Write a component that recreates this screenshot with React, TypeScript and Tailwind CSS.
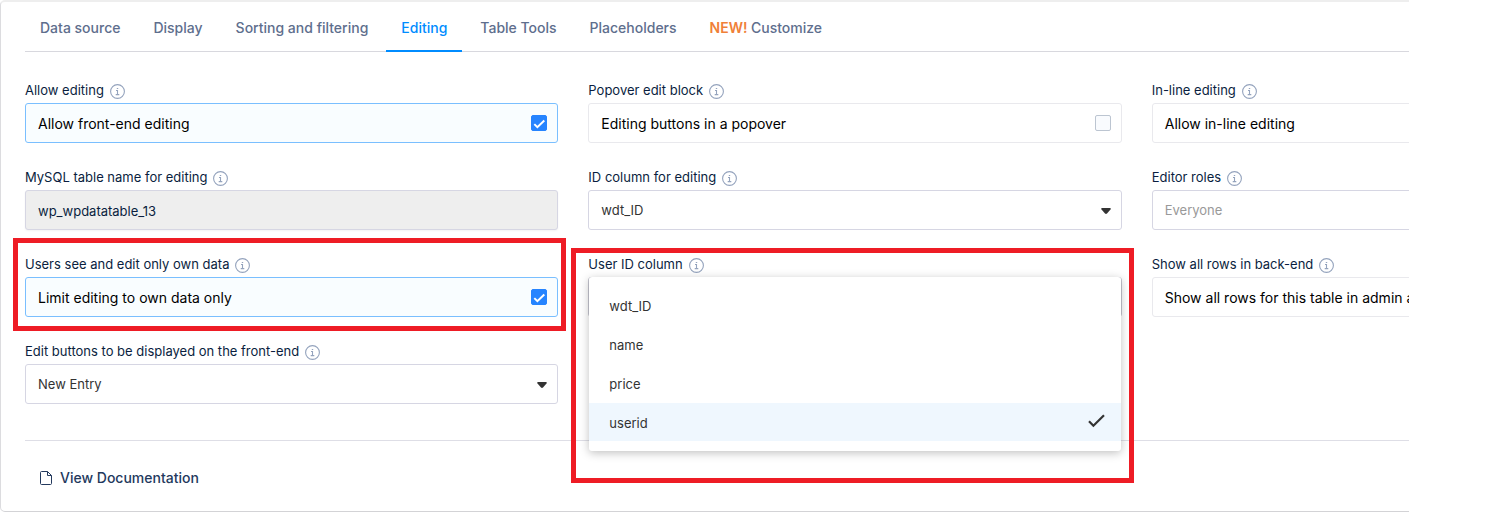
import { useState } from "react";
import type { ReactNode } from "react";

type FieldProps = { id: string; label: string; children: ReactNode };

function InfoIcon() {
  return (
    <svg width="15" height="15" viewBox="0 0 15 15" fill="none" className="shrink-0 text-[#94a3bd]" aria-hidden="true">
      <circle cx="7.5" cy="7.5" r="6.9" stroke="currentColor" strokeWidth="1.1" />
      <path d="M6.8 4.5h1.4M6 6.5h1.5v4.5M5.7 10.6h3.6" stroke="currentColor" strokeWidth="1.1" />
    </svg>
  );
}

function Field({ id, label, children }: FieldProps) {
  return (
    <div className="relative">
      <div className="mb-0.5 flex h-5 items-center gap-1.5 text-[13px] text-[#0a1e40]">
        <label htmlFor={id}>{label}</label>
        <InfoIcon />
      </div>
      {children}
    </div>
  );
}

function CheckField({ id, text, initial = false }: { id: string; text: string; initial?: boolean }) {
  const [checked, setChecked] = useState(initial);
  return (
    <label
      className={
        checked
          ? "flex h-10 items-center justify-between rounded-[3px] border border-[#7abfff] bg-[#f9fdff] pr-2.5 pl-3 text-sm text-black"
          : "flex h-10 items-center justify-between rounded-[3px] border border-[#e9e9ed] bg-white pr-2.5 pl-3 text-sm text-black"
      }
    >
      <span className="mt-0.5">{text}</span>
      <span className="grid size-4 place-items-center">
        <input
          id={id}
          type="checkbox"
          checked={checked}
          onChange={(e) => setChecked(e.target.checked)}
          className="col-start-1 row-start-1 size-4 appearance-none rounded-[2px] border border-[#bcc5d1] bg-[#f9fbfe] checked:border-[#2684ff] checked:bg-[#2684ff]"
        />
        {checked && (
          <svg viewBox="0 0 16 16" className="pointer-events-none z-10 col-start-1 row-start-1 size-4" fill="none" aria-hidden="true">
            <path d="M3.3 9.1l3.1 3 6.9-6.6" stroke="#fff" strokeWidth="2" />
          </svg>
        )}
      </span>
    </label>
  );
}

function SelectField({ id, value, muted = false }: { id: string; value: string; muted?: boolean }) {
  return (
    <div className="grid items-center">
      <select
        id={id}
        defaultValue={value}
        className={
          muted
            ? "col-start-1 row-start-1 h-10 w-full appearance-none rounded-[3px] border border-[#d6d6e3] bg-white px-3 pt-0.5 text-[13px] text-[#999]"
            : "col-start-1 row-start-1 h-10 w-full appearance-none rounded-[3px] border border-[#d6d6e3] bg-white px-3 pt-0.5 text-[13px] text-[#333]"
        }
      >
        <option>{value}</option>
      </select>
      <svg width="10" height="6" viewBox="0 0 10 6" className="pointer-events-none z-10 col-start-1 row-start-1 mt-0.5 mr-[11px] justify-self-end" aria-hidden="true">
        <path d="M1.2 0h7.6c1 0 1.4.9.7 1.6L6 5.5c-.6.6-1.4.6-2 0L.5 1.6C-.2.9.2 0 1.2 0z" fill="#333" />
      </svg>
    </div>
  );
}

function UserColumnSelect({ id }: { id: string }) {
  const [selected, setSelected] = useState("userid");
  return (
    <div className="relative">
      <button id={id} type="button" aria-haspopup="listbox" aria-expanded="true" aria-controls="user-columns" className="block h-10 w-full rounded-[3px] border border-[#c6c6d0] bg-white" />
      <div
        id="user-columns"
        role="listbox"
        aria-labelledby={id}
        className="absolute inset-x-px top-0 z-20 flex flex-col gap-px rounded-[3px] bg-white pt-[9px] pb-2.5 shadow-[0_2px_10px_rgba(0,0,0,0.25)]"
      >
        {["wdt_ID", "name", "price", "userid"].map((option) => (
          <button
            key={option}
            type="button"
            role="option"
            aria-selected={option === selected}
            onClick={() => setSelected(option)}
            className="flex h-[38px] w-full items-center justify-between pr-4 pl-5 text-left text-[13px] text-[#333] aria-selected:bg-[#eff7fe]"
          >
            <span className="pt-[3px]">{option}</span>
            {option === selected && (
              <svg width="17" height="14" viewBox="0 0 17 14" fill="none" className="mb-0.5" aria-hidden="true">
                <path d="M1 7.2l4.4 4.5L16 1.2" stroke="#333" strokeWidth="2.2" />
              </svg>
            )}
          </button>
        ))}
      </div>
    </div>
  );
}

const tabs = ["Data source", "Display", "Sorting and filtering", "Editing", "Table Tools", "Placeholders", "Customize"];

export default function App() {
  const [active, setActive] = useState("Editing");
  return (
    <main className="bg-white pr-[93px] font-['Inter','Liberation_Sans',sans-serif]">
      <section className="overflow-hidden rounded-l-[5px] border-t-2 border-b border-l border-t-[#eee] border-b-[#d3d3d6] border-l-[#dcdcdf] pl-6">
        <nav role="tablist" className="flex gap-[3px] border-b border-[#d8d8de] pt-4">
          {tabs.map((tab) => (
            <button
              key={tab}
              type="button"
              role="tab"
              aria-selected={tab === active}
              onClick={() => setActive(tab)}
              className="-mb-px border-b-2 border-transparent px-[15px] pb-3 text-sm font-medium whitespace-nowrap text-[#5e6e8d] aria-selected:border-[#008cff] aria-selected:text-[#008cff]"
            >
              {tab === "Customize" && <span className="font-semibold text-[#f08038]">NEW! </span>}
              {tab}
            </button>
          ))}
        </nav>

        <div className="grid w-[119.95%] grid-cols-3 gap-x-[30px] gap-y-[25px] pt-[29px]">
          <Field id="allow-editing" label="Allow editing">
            <CheckField id="allow-editing" text="Allow front-end editing" initial />
          </Field>
          <Field id="popover" label="Popover edit block">
            <CheckField id="popover" text="Editing buttons in a popover" />
          </Field>
          <Field id="inline" label="In-line editing">
            <CheckField id="inline" text="Allow in-line editing" />
          </Field>

          <Field id="mysql-table" label="MySQL table name for editing">
            <input
              id="mysql-table"
              readOnly
              value="wp_wpdatatable_13"
              className="block h-10 w-full rounded-[3px] border border-[#d6d6e3] bg-[#eee] px-3 pt-px text-[13px] text-[#0a1e40] shadow-xs"
            />
          </Field>
          <Field id="id-column" label="ID column for editing">
            <SelectField id="id-column" value="wdt_ID" />
          </Field>
          <Field id="roles" label="Editor roles">
            <SelectField id="roles" value="Everyone" muted />
          </Field>

          <Field id="own-data" label="Users see and edit only own data">
            <CheckField id="own-data" text="Limit editing to own data only" initial />
            <div className="pointer-events-none absolute -top-[17px] -right-2 -bottom-[14px] -left-3 border-5 border-[#ee1c25]" />
          </Field>
          <Field id="user-column" label="User ID column">
            <UserColumnSelect id="user-column" />
            <div className="pointer-events-none absolute -top-[7px] -right-3 -left-[17px] z-30 h-[235px] border-5 border-[#ee1c25]" />
          </Field>
          <Field id="all-rows" label="Show all rows in back-end">
            <CheckField id="all-rows" text="Show all rows for this table in admin a" />
          </Field>

          <Field id="buttons" label="Edit buttons to be displayed on the front-end">
            <SelectField id="buttons" value="New Entry" />
          </Field>
        </div>

        <footer className="mt-9 border-t border-[#dedee6] pt-[27px] pb-[23px] pl-[15px]">
          <a href="#documentation" className="flex w-fit items-center gap-2 text-sm font-medium text-[#23395d]">
            <svg width="12" height="14" viewBox="0 0 12 14" fill="none" stroke="currentColor" aria-hidden="true">
              <path d="M1.5.5h6l4 4v8c0 .6-.4 1-1 1h-9c-.6 0-1-.4-1-1v-11c0-.6.4-1 1-1zM7.5.5v4h4" />
            </svg>
            View Documentation
          </a>
        </footer>
      </section>
    </main>
  );
}
